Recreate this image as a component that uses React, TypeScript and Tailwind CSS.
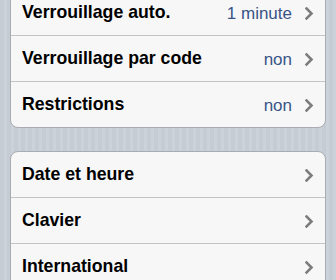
import React from "react";

type Row = { label: string; value?: string };

const Chevron = () => (
  <svg width="9" height="13" viewBox="0 0 9 13" className="shrink-0">
    <polyline
      points="1.5,1.5 6.5,6.5 1.5,11.5"
      fill="none"
      stroke="#7d7d7d"
      strokeWidth="2.6"
      strokeLinecap="square"
      strokeLinejoin="miter"
    />
  </svg>
);

const Group = ({ rows, className }: { rows: Row[]; className?: string }) => (
  <div
    className={
      "mx-[10px] rounded-[8px] border border-[#a9acb0] bg-[#f7f7f7] overflow-hidden " +
      (className ?? "")
    }
  >
    {rows.map((r, i) => (
      <div
        key={r.label}
        className={
          "flex items-center pl-[11px] pr-[11px] pt-[1px] " +
          (i < rows.length - 1 ? "h-[46px] border-b border-[#c4c4c6]" : "h-[45px]")
        }
      >
        <span className="flex-1 text-[17.7px] font-bold text-black leading-none">{r.label}</span>
        {r.value && (
          <span className="mr-[13px] text-[17px] text-[#385487] leading-none">{r.value}</span>
        )}
        <Chevron />
      </div>
    ))}
  </div>
);

export default function App() {
  return (
    <div
      className="h-[280px] w-[336px] overflow-hidden bg-[repeating-linear-gradient(90deg,#c5ccd4_0px,#c5ccd4_4px,#cbd2d9_4px,#cbd2d9_7px)]"
      style={{ fontFamily: '"Liberation Sans", Arial, sans-serif' }}
    >
      <Group
        className="mt-[-11px]"
        rows={[
          { label: "Verrouillage auto.", value: "1 minute" },
          { label: "Verrouillage par code", value: "non" },
          { label: "Restrictions", value: "non" },
        ]}
      />
      <Group
        className="mt-[23px]"
        rows={[
          { label: "Date et heure" },
          { label: "Clavier" },
          { label: "International" },
        ]}
      />
    </div>
  );
}
